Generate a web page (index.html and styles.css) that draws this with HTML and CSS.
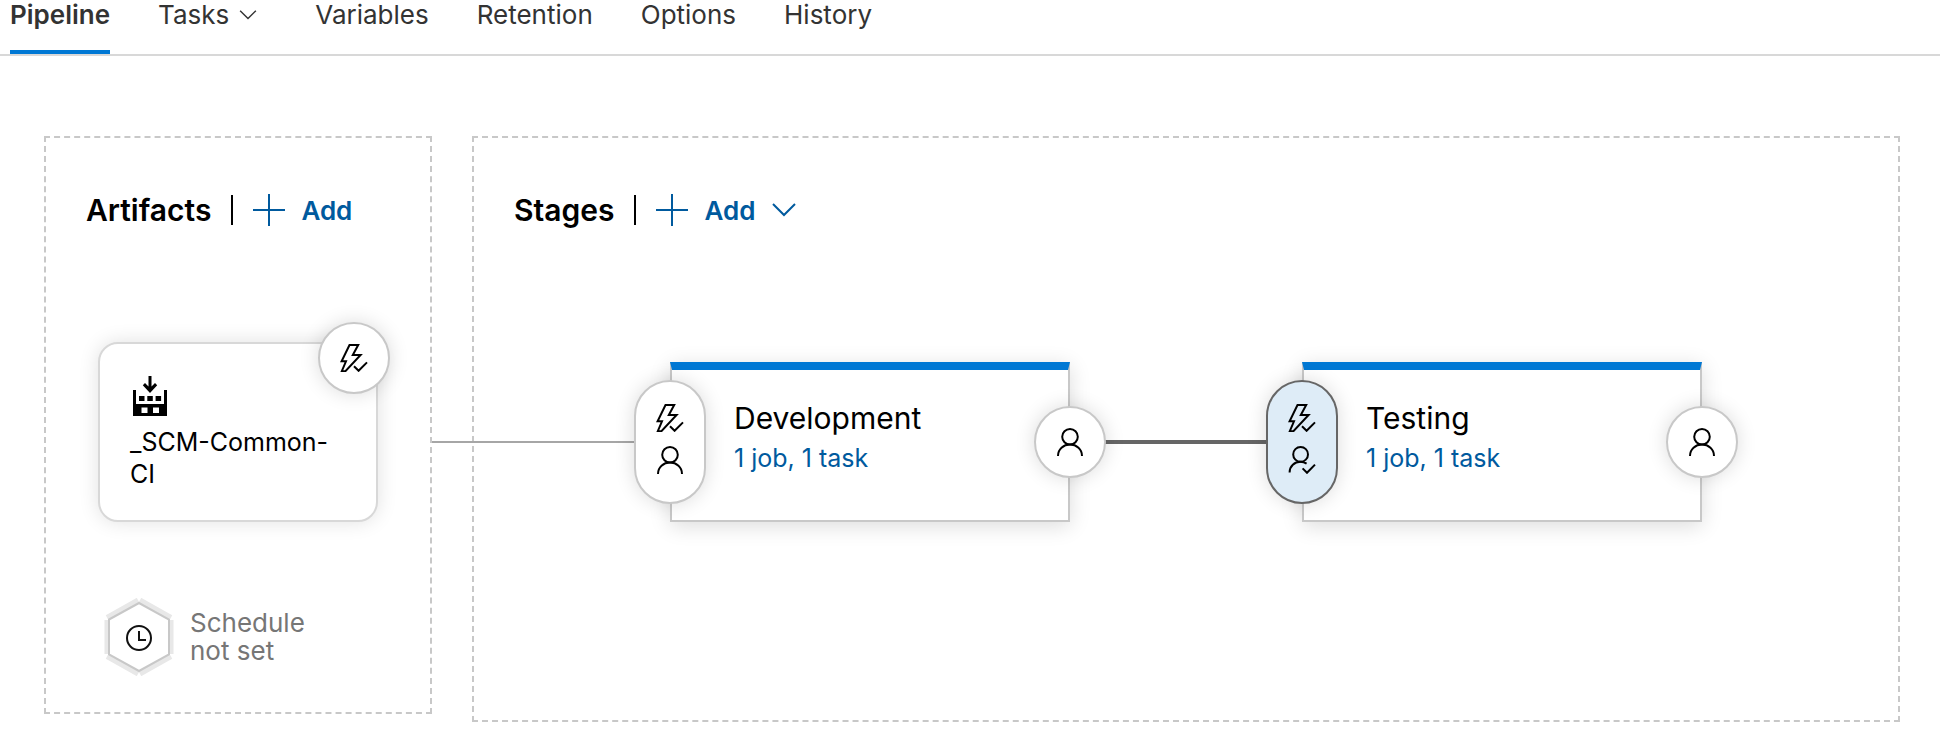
FILE: index.html
```html
<!DOCTYPE html>
<html lang="en">
<head>
<meta charset="utf-8">
<title>Release pipeline</title>
<link rel="stylesheet" href="styles.css">
</head>
<body>
<svg class="sprite" aria-hidden="true">
  <symbol id="bolt" viewBox="0 0 28 28">
    <path d="M9.5 1H18.2L12.8 11H20.6L5.4 27.2H1.8L6 17.3H1.6Z"/>
    <path d="M14 22.2L18.6 26.8L27 18.4"/>
  </symbol>
  <symbol id="person" viewBox="0 0 28 28">
    <circle cx="14" cy="8.8" r="7.8"/>
    <path d="M2 28C2 21.2 7.4 16.6 14 16.6S26 21.2 26 28"/>
  </symbol>
  <symbol id="person-check" viewBox="0 0 28 28">
    <circle cx="12.6" cy="8.4" r="7.4"/>
    <path d="M1.6 26.4C1.6 20 6.6 15.8 12.4 15.8C14.6 15.8 16.8 16.4 18.6 17.6"/>
    <path d="M14.6 22.4L19 26.8L27 18.6"/>
  </symbol>
  <symbol id="plus" viewBox="0 0 32 32"><path d="M16 0V32M0 16H32"/></symbol>
  <symbol id="chevron" viewBox="0 0 24 14"><path d="M1 1L12 12L23 1"/></symbol>
</svg>

<nav class="tabs">
  <a class="tab tab-active" href="#pipeline" aria-current="page">Pipeline</a>
  <a class="tab" href="#tasks">Tasks <svg class="tab-chevron"><use href="#chevron"/></svg></a>
  <a class="tab" href="#variables">Variables</a>
  <a class="tab" href="#retention">Retention</a>
  <a class="tab" href="#options">Options</a>
  <a class="tab" href="#history">History</a>
</nav>

<main class="canvas">
  <section class="panel artifacts">
    <header class="panel-head">
      <h2 class="panel-title">Artifacts</h2>
      <button class="add" type="button"><svg class="plus"><use href="#plus"/></svg>Add</button>
    </header>
    <article class="artifact">
      <svg class="source-icon" viewBox="0 0 34 40" aria-hidden="true">
        <path d="M15.500 0h3v10.500l3.500-3.500 2.200 2.200L17 17 9.800 9.200l2.200-2.200 3.500 3.500Z"/>
        <path fill-rule="evenodd" d="M0 14h3v14h28V14h3v26H0ZM8.500 31.500v5.500h6v-5.500ZM20 31.500v5.500h6v-5.500Z"/>
        <path d="M6 20h5.500v5H6ZM14.300 20h5.500v5h-5.500ZM22.600 20h5.500v5h-5.500Z"/>
      </svg>
      <p class="artifact-name">_SCM-Common-CI</p>
      <button class="badge trigger" type="button" aria-label="Continuous deployment trigger"><svg class="icon"><use href="#bolt"/></svg></button>
    </article>
    <button class="schedule" type="button">
      <svg class="hexagon" viewBox="0 0 70 78" aria-hidden="true">
        <path class="hex-halo" d="M3 22V56M67 22V56M3 19.500L34 2M36 2L67 19.500M3 58.500L34 76M36 76L67 58.500"/>
        <path class="hex-edge" d="M5 21.500L35 5L65 21.500V56.500L35 73L5 56.500Z"/>
        <circle class="clock" cx="35" cy="40" r="12"/>
        <path class="clock" d="M35 33V42H42"/>
      </svg>
      <span class="schedule-text">Schedule<br>not set</span>
    </button>
  </section>

  <section class="panel stages">
    <header class="panel-head">
      <h2 class="panel-title">Stages</h2>
      <button class="add" type="button"><svg class="plus"><use href="#plus"/></svg>Add<svg class="add-chevron"><use href="#chevron"/></svg></button>
    </header>
    <div class="flow">
      <div class="link link-in"></div>
      <article class="stage">
        <button class="badge pre" type="button" aria-label="Pre-deployment conditions"><svg class="icon"><use href="#bolt"/></svg><svg class="icon"><use href="#person"/></svg></button>
        <h3 class="stage-name">Development</h3>
        <a class="stage-tasks" href="#development">1 job, 1 task</a>
        <button class="badge post" type="button" aria-label="Post-deployment conditions"><svg class="icon"><use href="#person"/></svg></button>
      </article>
      <div class="link link-between"></div>
      <article class="stage">
        <button class="badge pre pre-set" type="button" aria-label="Pre-deployment conditions"><svg class="icon"><use href="#bolt"/></svg><svg class="icon"><use href="#person-check"/></svg></button>
        <h3 class="stage-name">Testing</h3>
        <a class="stage-tasks" href="#testing">1 job, 1 task</a>
        <button class="badge post" type="button" aria-label="Post-deployment conditions"><svg class="icon"><use href="#person"/></svg></button>
      </article>
    </div>
  </section>
</main>
</body>
</html>
```
FILE: styles.css
```css
* { box-sizing: border-box; }

body {
  margin: 0;
  background: #fff;
  color: #000;
  font-family: Inter, "Liberation Sans", sans-serif;
  font-size: 26px;
}

h2, h3, p { margin: 0; }

button {
  padding: 0;
  border: 0;
  background: none;
  font: inherit;
  cursor: pointer;
}

a { text-decoration: none; }

svg { display: block; fill: none; stroke: currentColor; }

.sprite { position: absolute; width: 0; height: 0; }

.tabs {
  display: flex;
  gap: 48px;
  padding-left: 10px;
  border-bottom: 2px solid #d8d8d8;
}

.tab {
  display: flex;
  align-items: center;
  height: 54px;
  padding-bottom: 20px;
  border-bottom: 4px solid transparent;
  color: #333;
  line-height: 30px;
}

.tab-active { border-color: #0078d4; font-weight: 600; }

.tab-chevron { width: 18px; height: 10px; margin: 0 10px; stroke-width: 2; }

.canvas {
  display: flex;
  align-items: flex-start;
  gap: 40px;
  padding: 80px 40px 0 44px;
}

.panel { padding: 54px 40px 0; border: 2px dashed #c8c8c8; }

.artifacts { flex: none; width: 388px; padding-bottom: 36px; }

.stages { flex: 1; padding-bottom: 198px; }

.panel-head { display: flex; align-items: center; height: 36px; }

.panel-title {
  padding-right: 20px;
  font-size: 30px;
  font-weight: 600;
  line-height: 36px;
}

.add {
  display: flex;
  align-items: center;
  height: 30px;
  padding-left: 20px;
  border-left: 2px solid #000;
  color: #005a9e;
  font-weight: 600;
}

.plus { width: 32px; height: 32px; margin-right: 16px; stroke-width: 2; }

.add-chevron { width: 24px; height: 14px; margin-left: 17px; stroke-width: 2; }

.artifact {
  position: relative;
  width: 280px;
  height: 180px;
  margin: 114px 0 0 12px;
  padding: 32px 30px;
  border: 2px solid #d8d8d8;
  border-radius: 20px;
  background: #fff;
  box-shadow: 0 0 20px rgba(0, 0, 0, 0.12);
}

.source-icon { width: 34px; height: 40px; margin-left: 3px; fill: #000; stroke: none; }

.artifact-name { margin-top: 10px; line-height: 32px; font-size: 25px; }

.badge {
  position: absolute;
  display: flex;
  flex-direction: column;
  align-items: center;
  justify-content: center;
  gap: 14px;
  width: 72px;
  height: 72px;
  border: 2px solid #c8c8c8;
  border-radius: 36px;
  background: #fff;
  color: #000;
  box-shadow: 0 0 20px rgba(0, 0, 0, 0.14);
}

.icon { width: 28px; height: 28px; stroke-width: 2; }

.trigger { top: -22px; right: -14px; }

.schedule {
  display: flex;
  align-items: center;
  gap: 16px;
  margin: 76px 0 0 18px;
  color: #767676;
  line-height: 28px;
  text-align: left;
}

.hexagon { width: 70px; height: 78px; }

.hex-halo { stroke: #e8e8e8; stroke-width: 5; }

.hex-edge { stroke: #c8c8c8; stroke-width: 2; fill: #fff; }

.clock { stroke: #111; stroke-width: 2; }

.flow { display: flex; align-items: center; margin: 134px 0 0 -82px; }

.link { flex: none; }

.link-in { width: 238px; height: 2px; background: #a6a6a6; }

.link-between { width: 232px; height: 4px; background: #666; }

.stage {
  position: relative;
  flex: none;
  width: 400px;
  height: 160px;
  padding: 30px 62px 0;
  border: 2px solid #c8c8c8;
  border-top: 8px solid #0078d4;
  background: #fff;
  box-shadow: 0 4px 20px rgba(0, 0, 0, 0.14);
}

.stage-name { font-size: 30px; font-weight: 400; line-height: 36px; }

.stage-tasks { display: block; margin-top: 6px; color: #005a9e; font-size: 25px; line-height: 32px; }

.pre { top: 10px; left: -38px; height: 124px; padding-bottom: 6px; }

.pre-set { border-color: #666; background: #deecf7; }

.post { top: 36px; right: -38px; }
```
